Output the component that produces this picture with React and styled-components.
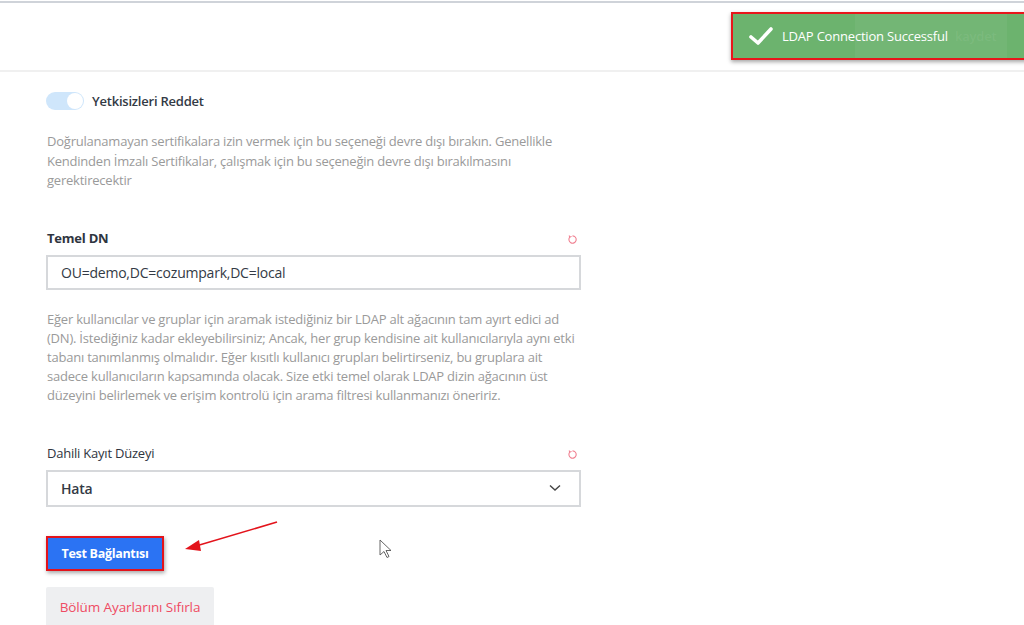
import styled, { createGlobalStyle } from 'styled-components';

const GlobalStyle = createGlobalStyle`
    html, body {
        margin: 0;
        padding: 0;
        background: #fff;
        font-family: "Open Sans", "Noto Sans", sans-serif;
        overflow: hidden;
    }
`;

const Page = styled.div`
    position: relative;
    width: 1024px;
    height: 625px;
    overflow: hidden;
`;

const Header = styled.div`
    position: relative;
    height: 67px;
    border-top: 2px solid #cfd3d9;
    margin-top: 1px;
    border-bottom: 2px solid #f0f0f0;
`;

const Toast = styled.div`
    position: absolute;
    top: 9px;
    left: 731px;
    width: 284px;
    height: 44px;
    border: 2px solid #e8161b;
    background: #6cb36e;
    box-shadow: 0 2px 4px rgba(0, 0, 0, 0.35);
    display: flex;
    align-items: center;
    gap: 9px;
    padding-left: 16px;
    box-sizing: content-box;
    color: #fff;
    font-size: 13px;
    letter-spacing: -0.2px;
    overflow: hidden;
`;

const GhostSave = styled.div`
    position: absolute;
    top: 0;
    left: 122px;
    width: 152px;
    height: 100%;
    background: rgba(255, 255, 255, 0.05);
    color: rgba(255, 255, 255, 0.07);
    font-weight: 600;
    display: flex;
    align-items: center;
    padding-left: 100px;
    box-sizing: border-box;
`;

const ToastText = styled.span`
    position: relative;
`;

const Content = styled.div`
    width: 535px;
    padding: 20px 0 0 46px;
    display: flex;
    flex-direction: column;
    letter-spacing: -0.22px;
`;

const ToggleRow = styled.div`
    display: flex;
    align-items: center;
    gap: 8px;
    height: 18px;
`;

const Toggle = styled.div`
    width: 38px;
    height: 18px;
    border-radius: 9px;
    background: #cfe6fb;
    display: flex;
    justify-content: flex-end;
    align-items: center;
    padding: 1px;
    box-sizing: border-box;
`;

const Knob = styled.div`
    width: 16px;
    height: 16px;
    border-radius: 50%;
    background: #fff;
`;

const ToggleLabel = styled.span`
    font-size: 13px;
    font-weight: 600;
    color: #333a45;
`;

const Help = styled.p`
    margin: ${p => p.$top}px 0 0 1px;
    font-size: 13px;
    line-height: ${p => p.$lh}px;
    color: #9a9a9a;
`;

const FieldHead = styled.div`
    margin-top: 37px;
    display: flex;
    justify-content: space-between;
    align-items: center;
    height: 20px;
    padding-left: 1px;
`;

const Label = styled.span`
    font-size: 13px;
    font-weight: ${p => p.$weight};
    color: #2f3540;
`;

const ResetIcon = styled.svg`
    width: 11px;
    height: 11px;
    margin-right: 3px;
    margin-top: 4px;
`;

const Field = styled.div`
    margin-top: 7px;
    height: ${p => p.$h}px;
    border: 2px solid #d6d8db;
    display: flex;
    align-items: center;
    justify-content: space-between;
    padding: 0 18px 0 13px;
    box-sizing: border-box;
    font-size: 14px;
    font-weight: ${p => p.$weight || 400};
    color: #333a45;
`;

const PrimaryButton = styled.button`
    margin-top: 29px;
    align-self: flex-start;
    width: 118px;
    height: 35px;
    background: #2b73f3;
    border: 2px solid #e3131b;
    color: #fff;
    font-family: inherit;
    font-size: 12.5px;
    font-weight: 700;
    letter-spacing: -0.3px;
    box-shadow: 1px 2px 4px rgba(0, 0, 0, 0.35);
`;

const GhostButton = styled.button`
    margin-top: 16px;
    align-self: flex-start;
    width: 168px;
    height: 40px;
    background: #eeeff1;
    border: none;
    border-radius: 2px;
    color: #ef4b63;
    font-family: inherit;
    font-size: 13.5px;
    font-weight: 500;
    letter-spacing: -0.1px;
`;

const Overlay = styled.svg`
    position: absolute;
    left: 0;
    top: 0;
    pointer-events: none;
`;

const Reset = () => (
    <ResetIcon viewBox="0 0 12 12">
        <path d="M3.2 3.2 A4 4 0 1 0 6 2" fill="none" stroke="#f07f90" strokeWidth="1.2" />
        <path d="M2.2 1.6 L3.2 3.4 L5 2.6" fill="none" stroke="#f07f90" strokeWidth="1.1" />
    </ResetIcon>
);

const App = () => {
    return (
        <Page>
            <GlobalStyle />
            <Header>
                <Toast>
                    <GhostSave>kaydet</GhostSave>
                    <svg width="24" height="20" viewBox="0 0 24 20" style={{ position: 'relative' }}>
                        <path d="M2 11 L9 17 L22 3" fill="none" stroke="#fff" strokeWidth="3.6" strokeLinecap="round" strokeLinejoin="round" />
                    </svg>
                    <ToastText>LDAP Connection Successful</ToastText>
                </Toast>
            </Header>
            <Content>
                <ToggleRow>
                    <Toggle><Knob /></Toggle>
                    <ToggleLabel>Yetkisizleri Reddet</ToggleLabel>
                </ToggleRow>
                <Help $top={22} $lh={19.5}>
                    Doğrulanamayan sertifikalara izin vermek için bu seçeneği devre dışı bırakın. Genellikle Kendinden İmzalı Sertifikalar, çalışmak için bu seçeneğin devre dışı bırakılmasını gerektirecektir
                </Help>
                <FieldHead>
                    <Label $weight={700}>Temel DN</Label>
                    <Reset />
                </FieldHead>
                <Field $h={35}>OU=demo,DC=cozumpark,DC=local</Field>
                <Help $top={20} $lh={19.2}>
                    Eğer kullanıcılar ve gruplar için aramak istediğiniz bir LDAP alt ağacının tam ayırt edici ad (DN). İstediğiniz kadar ekleyebilirsiniz; Ancak, her grup kendisine ait kullanıcılarıyla aynı etki tabanı tanımlanmış olmalıdır. Eğer kısıtlı kullanıcı grupları belirtirseniz, bu gruplara ait sadece kullanıcıların kapsamında olacak. Size etki temel olarak LDAP dizin ağacının üst düzeyini belirlemek ve erişim kontrolü için arama filtresi kullanmanızı öneririz.
                </Help>
                <FieldHead>
                    <Label $weight={500}>Dahili Kayıt Düzeyi</Label>
                    <Reset />
                </FieldHead>
                <Field $h={37} $weight={600}>
                    Hata
                    <svg width="12" height="8" viewBox="0 0 12 8">
                        <path d="M1 1.5 L6 6 L11 1.5" fill="none" stroke="#444" strokeWidth="1.4" />
                    </svg>
                </Field>
                <PrimaryButton>Test Bağlantısı</PrimaryButton>
                <GhostButton>Bölüm Ayarlarını Sıfırla</GhostButton>
            </Content>
            <Overlay width="1024" height="625">
                <line x1="277" y1="522" x2="196" y2="546" stroke="#e3131b" strokeWidth="1.6" />
                <polygon points="185,549 199,540 201,551" fill="#e3131b" />
                <path d="M380 540 L380 555 L384 551.5 L387 557.5 L389 556.5 L386 550.5 L391 550.5 Z" fill="#fff" stroke="#555" strokeWidth="0.9" strokeLinejoin="round" />
            </Overlay>
        </Page>
    );
};

export default App;
